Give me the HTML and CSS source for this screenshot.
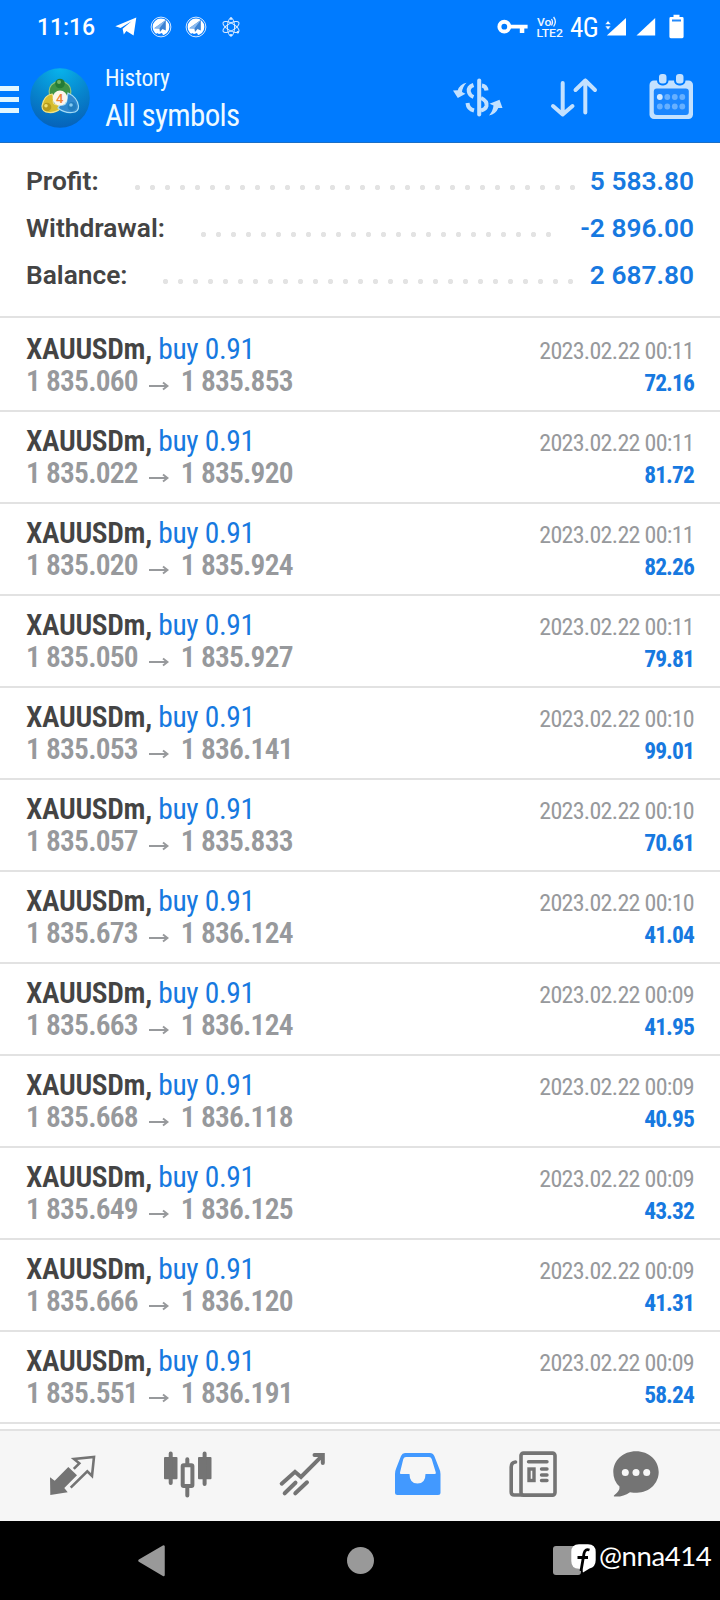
FILE: index.html
```html
<!DOCTYPE html>
<html lang="en">
<head>
<meta charset="utf-8">
<title>History</title>
<link rel="stylesheet" href="styles.css">
</head>
<body>
<div class="status">
  <span class="clock">11:16</span>
  <svg class="tg" width="22" height="20" viewBox="0 0 22 20"><path d="M0.3 9.3 21.3 0.6 18.6 18.6 11.4 14 8.8 17.5 7.6 11.8 16.5 4.2 5.6 11Z" fill="#fff"/></svg>
  <svg class="ring1" width="22" height="22" viewBox="0 0 22 22"><circle cx="11" cy="11" r="9.9" fill="none" stroke="#d5e8ff"/><circle cx="11" cy="11" r="8.4" fill="#fff"/><path d="M4.2 12.2 15.8 4V14.5L12.5 13 10 16 9.4 12.5Z" fill="#3c82d2"/><path d="m4.2 12.2 11.6-8.200-6.400 8.500Z" fill="#8abaf0"/><path d="M6 18.500 7 17 9 18 12 17 13 19 11 20Z" fill="#057aff"/></svg>
  <svg class="ring2" width="22" height="22" viewBox="0 0 22 22"><circle cx="11" cy="11" r="9.9" fill="none" stroke="#d5e8ff"/><circle cx="11" cy="11" r="8.4" fill="#fff"/><path d="M4.2 12.2 15.8 4V14.5L12.5 13 10 16 9.4 12.5Z" fill="#3c82d2"/><path d="m4.2 12.2 11.6-8.200-6.400 8.500Z" fill="#8abaf0"/><path d="M6 18.500 7 17 9 18 12 17 13 19 11 20Z" fill="#057aff"/></svg>
  <svg class="atom" width="18" height="20" viewBox="0 0 18 20" fill="none" stroke="#dcecff" stroke-width="1"><ellipse cx="9" cy="10" rx="3.6" ry="9"/><ellipse cx="9" cy="10" rx="3.6" ry="9" transform="rotate(60 9 10)"/><ellipse cx="9" cy="10" rx="3.6" ry="9" transform="rotate(120 9 10)"/><g fill="#dcecff" stroke="none"><circle cx="9" cy="1.6" r="1.3"/><circle cx="15.8" cy="15.3" r="1.2"/><circle cx="9" cy="18.2" r="1.3"/></g></svg>
  <svg class="key" width="31" height="16" viewBox="0 0 31 16"><circle cx="7.3" cy="7.7" r="4.9" fill="none" stroke="#fff" stroke-width="4"/><path d="M12.5 5.8H30.6V9.6H27.3V14H22.8V9.6H12.5Z" fill="#fff"/></svg>
  <svg class="volte" width="28" height="24" viewBox="0 0 28 24"><g fill="#eef6ff" font-family="Roboto" font-weight="500"><text x="1" y="10" font-size="11" textLength="14.500" lengthAdjust="spacingAndGlyphs">Vo</text><text x="0.500" y="21" font-size="11.500" textLength="26.500" lengthAdjust="spacingAndGlyphs">LTE2</text></g><path d="M15.500 3Q17.500 6 15.500 9.500M17.600 1Q21 5.500 17.600 10.500" fill="none" stroke="#eef6ff" stroke-width="1.300"/></svg>
  <span class="net">4G</span>
  <svg class="sig1" width="22" height="20" viewBox="0 0 22 20" fill="#fff"><path d="M21 1V18.6H1.8Z"/><path d="M0 7.5 3 3.6 6 7.5ZM0 9 3 13 6 9Z" stroke="#007bff" stroke-width=".6"/></svg>
  <svg class="sig2" width="20" height="20" viewBox="0 0 20 20"><path d="M19.2 1V18.6H0.5Z" fill="#fff"/></svg>
  <svg class="bat" width="15" height="25" viewBox="0 0 15 25"><path d="M4.5 0.7H10.5V3H13.2Q14.6 3 14.6 4.4V22.8Q14.6 24.2 13.2 24.2H1.8Q.4 24.2 .4 22.8V4.4Q.4 3 1.8 3H4.5Z" fill="#fff"/><path d="M3 5.500H12V7.500H3Z" fill="#2389fb"/></svg>
</div>
<header class="bar">
  <div class="burger"><i></i><i></i><i></i></div>
  <svg class="logo" width="60" height="60" viewBox="0 0 60 60">
    <defs>
      <radialGradient id="sea" cx=".5" cy="0" r="1"><stop offset="0" stop-color="#08b4ec"/><stop offset=".55" stop-color="#0785cd"/><stop offset="1" stop-color="#0662ba"/></radialGradient>
    </defs>
    <circle cx="30" cy="30" r="29.8" fill="url(#sea)"/>
    <path d="M19.500 27Q18 18 24 15Q30 11 36 15Q42 18 40.500 27L36 30Q31 21 24 31Z" fill="#3d9346" stroke="#93c57a" stroke-width="1.200"/>
    <path d="M22 26Q14 27 12 38Q12 44 19 44.500Q26 45 31 40L28 37Q21 37 24 30Z" fill="#d6bd2f" stroke="#efe28b" stroke-width="1.200"/>
    <path d="M38 25Q47 29 48.500 38Q49 44 42 44.500Q34 45 28 40L30 37Q37 38 37 31Z" fill="#3189cf" stroke="#a5dbf5" stroke-width="1.200"/>
    <circle cx="30" cy="15.5" r="4.8" fill="#247b35"/><circle cx="29" cy="14" r="2" fill="#73b464"/>
    <circle cx="17" cy="39" r="4.3" fill="#b59a1d"/><circle cx="16" cy="37.8" r="1.8" fill="#eee072"/>
    <circle cx="42" cy="38.5" r="4.4" fill="#227dbf"/><circle cx="41" cy="37" r="1.8" fill="#84caf2"/>
    <circle cx="30" cy="30" r="7.4" fill="#fbf6ec"/>
    <text x="29.7" y="34.6" font-family="Roboto" font-weight="500" font-size="13" fill="#ef8333" text-anchor="middle">4</text>
  </svg>
  <div class="titles"><div class="sub">History</div><div class="main">All symbols</div></div>
  <svg class="cash" width="50" height="40" viewBox="0 0 50 40" fill="none" stroke="#c3e1ff" stroke-width="4"><path d="M26.2 2.500V36.500" stroke-linecap="round"/><path d="M20.500 7Q15 9 15.800 13.500Q16.500 17.500 20.500 19M14.5 25Q15 31 21 32.5M29 7.5Q33 8 33.5 12.5M28 20Q34.5 23 33.5 28Q32.5 31.5 28 32.5"/><path d="M13.5 4.8Q6.5 6.500 4.800 12.300L0 12.500 4.800 20 12.500 15.800 9 14Q9.500 9 13.500 4.800ZM36 37.500Q43 36 45.300 30L49.500 30 46.500 21.800 36.500 25.800 40.500 27.500Q40 33 36 37.500Z" fill="#c3e1ff" stroke="none"/></svg>
  <svg class="sort" width="48" height="42" viewBox="0 0 48 42" fill="none" stroke="#c3e1ff" stroke-width="4" stroke-linecap="round" stroke-linejoin="round"><path d="M12.700 6V37.500M3 29 12.700 37.500 22.500 29M35.300 35.500V3.500M25.500 13 35.300 3.500 45 13"/></svg>
  <svg class="cal" width="45" height="46" viewBox="0 0 45 46"><rect x=".500" y="6.500" width="43.500" height="38.500" rx="4.500" fill="#c3e1ff"/><rect x="4.800" y="14.500" width="35" height="26.500" rx="3" fill="#1a86ff"/><g fill="#c3e1ff" stroke="#007bff" stroke-width="2"><rect x="9" y="-1" width="9.500" height="11.500" rx="4"/><rect x="26" y="-1" width="9.500" height="11.500" rx="4"/></g><g fill="#67b0ff"><circle cx="18.300" cy="23" r="2.900"/><circle cx="25.800" cy="23" r="2.900"/><circle cx="33.300" cy="23" r="2.900"/><circle cx="10.800" cy="32.500" r="2.900"/><circle cx="18.300" cy="32.500" r="2.900"/><circle cx="25.800" cy="32.500" r="2.900"/><circle cx="33.300" cy="32.500" r="2.900"/></g><circle cx="10.800" cy="23" r="2.900" fill="#d5eaff"/></svg>
</header>
<section class="summary">
  <div class="line profit"><b>Profit:</b><i></i><em>5 583.80</em></div>
  <div class="line withdrawal"><b>Withdrawal:</b><i></i><em>-2 896.00</em></div>
  <div class="line balance"><b>Balance:</b><i></i><em>2 687.80</em></div>
</section>
<main class="deals">
  <div class="deal"><div><p class="sym"><b>XAUUSDm,</b> buy 0.91</p><p class="price">1 835.060 <svg width="20" height="10" viewBox="0 0 20 10"><path d="M0 5H17M14 1.500 18.500 5 14 8.500"/></svg> 1 835.853</p></div><div class="right"><p class="date">2023.02.22 00:11</p><p class="val">72.16</p></div></div>
  <div class="deal"><div><p class="sym"><b>XAUUSDm,</b> buy 0.91</p><p class="price">1 835.022 <svg width="20" height="10" viewBox="0 0 20 10"><path d="M0 5H17M14 1.500 18.500 5 14 8.500"/></svg> 1 835.920</p></div><div class="right"><p class="date">2023.02.22 00:11</p><p class="val">81.72</p></div></div>
  <div class="deal"><div><p class="sym"><b>XAUUSDm,</b> buy 0.91</p><p class="price">1 835.020 <svg width="20" height="10" viewBox="0 0 20 10"><path d="M0 5H17M14 1.500 18.500 5 14 8.500"/></svg> 1 835.924</p></div><div class="right"><p class="date">2023.02.22 00:11</p><p class="val">82.26</p></div></div>
  <div class="deal"><div><p class="sym"><b>XAUUSDm,</b> buy 0.91</p><p class="price">1 835.050 <svg width="20" height="10" viewBox="0 0 20 10"><path d="M0 5H17M14 1.500 18.500 5 14 8.500"/></svg> 1 835.927</p></div><div class="right"><p class="date">2023.02.22 00:11</p><p class="val">79.81</p></div></div>
  <div class="deal"><div><p class="sym"><b>XAUUSDm,</b> buy 0.91</p><p class="price">1 835.053 <svg width="20" height="10" viewBox="0 0 20 10"><path d="M0 5H17M14 1.500 18.500 5 14 8.500"/></svg> 1 836.141</p></div><div class="right"><p class="date">2023.02.22 00:10</p><p class="val">99.01</p></div></div>
  <div class="deal"><div><p class="sym"><b>XAUUSDm,</b> buy 0.91</p><p class="price">1 835.057 <svg width="20" height="10" viewBox="0 0 20 10"><path d="M0 5H17M14 1.500 18.500 5 14 8.500"/></svg> 1 835.833</p></div><div class="right"><p class="date">2023.02.22 00:10</p><p class="val">70.61</p></div></div>
  <div class="deal"><div><p class="sym"><b>XAUUSDm,</b> buy 0.91</p><p class="price">1 835.673 <svg width="20" height="10" viewBox="0 0 20 10"><path d="M0 5H17M14 1.500 18.500 5 14 8.500"/></svg> 1 836.124</p></div><div class="right"><p class="date">2023.02.22 00:10</p><p class="val">41.04</p></div></div>
  <div class="deal"><div><p class="sym"><b>XAUUSDm,</b> buy 0.91</p><p class="price">1 835.663 <svg width="20" height="10" viewBox="0 0 20 10"><path d="M0 5H17M14 1.500 18.500 5 14 8.500"/></svg> 1 836.124</p></div><div class="right"><p class="date">2023.02.22 00:09</p><p class="val">41.95</p></div></div>
  <div class="deal"><div><p class="sym"><b>XAUUSDm,</b> buy 0.91</p><p class="price">1 835.668 <svg width="20" height="10" viewBox="0 0 20 10"><path d="M0 5H17M14 1.500 18.500 5 14 8.500"/></svg> 1 836.118</p></div><div class="right"><p class="date">2023.02.22 00:09</p><p class="val">40.95</p></div></div>
  <div class="deal"><div><p class="sym"><b>XAUUSDm,</b> buy 0.91</p><p class="price">1 835.649 <svg width="20" height="10" viewBox="0 0 20 10"><path d="M0 5H17M14 1.500 18.500 5 14 8.500"/></svg> 1 836.125</p></div><div class="right"><p class="date">2023.02.22 00:09</p><p class="val">43.32</p></div></div>
  <div class="deal"><div><p class="sym"><b>XAUUSDm,</b> buy 0.91</p><p class="price">1 835.666 <svg width="20" height="10" viewBox="0 0 20 10"><path d="M0 5H17M14 1.500 18.500 5 14 8.500"/></svg> 1 836.120</p></div><div class="right"><p class="date">2023.02.22 00:09</p><p class="val">41.31</p></div></div>
  <div class="deal"><div><p class="sym"><b>XAUUSDm,</b> buy 0.91</p><p class="price">1 835.551 <svg width="20" height="10" viewBox="0 0 20 10"><path d="M0 5H17M14 1.500 18.500 5 14 8.500"/></svg> 1 836.191</p></div><div class="right"><p class="date">2023.02.22 00:09</p><p class="val">58.24</p></div></div>
</main>
<nav class="tabs">
  <svg width="50" height="50" viewBox="0 0 50 50"><path d="M20.300 17 29 25.300 16.300 38 19.700 42.300 2.300 45 2 27.300 6.700 30.700Z" fill="#747474"/><path d="M25.800 18.800 31.300 13.300 26 8.900 46 7 44 26 39.300 21.300 22.700 37.700" fill="none" stroke="#747474" stroke-width="2.600"/></svg>
  <svg width="50" height="50" viewBox="0 0 50 50"><g fill="#747474"><rect x="1" y="7" width="13.500" height="22.300" rx="1"/><rect x="35" y="7" width="13.500" height="22.300" rx="1"/></g><path d="M7.700 3.500V33M24.300 9.300V14M24.300 38V45.500M41.600 3.500V34" stroke="#747474" stroke-width="4" stroke-linecap="round"/><rect x="19.700" y="15.300" width="9.700" height="20.700" rx="1" fill="none" stroke="#747474" stroke-width="4"/></svg>
  <svg width="50" height="50" viewBox="0 0 50 50" fill="none" stroke="#747474" stroke-width="4" stroke-linecap="round" stroke-linejoin="miter"><path d="M3.700 33.700 17 21.800 23 27 44.300 5.700M36.500 5H44.800V13M6.700 43.300 17.500 32.700M17.300 43.300 29 32.300"/></svg>
  <svg width="50" height="50" viewBox="0 0 50 50"><path fill-rule="evenodd" d="M12 3H37Q40 3 41.300 6L46 18Q47.500 21 47.500 24V42.500Q47.500 45 45 45H4.500Q2 45 2 42.500V24Q2 21 3.300 18L8 6Q9.300 3 12 3ZM13 7Q11 7 10.300 9L7 22.500Q6.700 24 8 24H16.500Q16.500 33.500 24.500 33.500 32.500 33.500 32.500 24H41.500Q43.200 24 42.800 22.500L38.700 9Q38 7 36 7Z" fill="#4299ff"/></svg>
  <svg width="50" height="50" viewBox="0 0 50 50" fill="none" stroke="#747474" stroke-width="3.600"><rect x="12" y="3.100" width="34" height="42" rx="2.500"/><path d="M6.500 12Q2.200 12.500 2.200 17V42Q2.200 45 5.200 45H13" stroke-linecap="round"/><path d="M19.500 11.700H38M32.500 19H38M32.500 25H38M32.500 30.500H38" stroke-width="3.400" stroke-linecap="round"/><rect x="20" y="19" width="5" height="11.500" stroke-width="3.400"/></svg>
  <svg width="50" height="50" viewBox="0 0 50 50"><path d="M24 1.300C37 1.300 46.700 10.500 46.700 22S37 42.700 25 42.700Q21.500 42.700 18 42.200 10.500 47.300 2.300 46.500 1 46.200 3 44.500 8 40.500 7.500 36.500 1.300 31 1.300 22C1.300 10.500 11 1.300 24 1.300Z" fill="#747474"/><g fill="#f6f6f6"><circle cx="13.300" cy="22.400" r="3.500"/><circle cx="24" cy="22.400" r="3.500"/><circle cx="34.700" cy="22.400" r="3.500"/></g></svg>
</nav>
<footer class="sys">
  <svg width="28" height="34" viewBox="0 0 28 34"><path d="M1.500 16.700 25.500 2.500V31Z" fill="#999" stroke="#999" stroke-width="2.500" stroke-linejoin="round"/></svg>
  <span class="home"></span>
  <span class="recent"></span>
  <div class="mark">
    <svg width="25" height="29" viewBox="0 0 25 29"><path d="M8 .300H17Q24.700 .300 24.700 8V16Q24.700 23 18.500 24.500L12 28.500 11 24.700H8Q.300 24.700 .300 17V8Q.300 .300 8 .300Z" fill="#fff"/><path d="M18.500 6Q14 4.500 13 9.500L10 27M6.500 13.500H17" fill="none" stroke="#000" stroke-width="2.800"/></svg>
    <span>@nna414</span>
  </div>
</footer>
</body>
</html>
```
FILE: styles.css
```css
* { box-sizing: border-box; }
body { margin: 0; width: 720px; height: 1600px; overflow: hidden; background: #fff; font-family: Roboto, sans-serif; }
p { margin: 0; }
svg { display: block; flex: none; }

.status { height: 54px; background: #007bff; display: flex; align-items: flex-start; color: #fff; padding-left: 37px; }
.clock { width: 78px; font-size: 23px; line-height: 28px; margin-top: 14px; font-weight: 500; letter-spacing: -.1px; white-space: nowrap; }
.tg { margin-top: 17px; }
.ring1, .ring2 { margin: 16px 0 0 13px; }
.atom { margin: 17px 0 0 15px; }
.key { margin: 19px 0 0 257px; }
.volte { margin: 16px 0 0 8px; }
.net { width: 35px; margin: 12px 0 0 6px; font-size: 27px; line-height: 32px; font-stretch: 75%; letter-spacing: -.7px; }
.sig1 { margin: 17px 0 0 0; }
.sig2 { margin: 17px 0 0 9px; }
.bat { margin: 14px 0 0 13px; }

.bar { height: 89px; background: #007bff; border-bottom: 1px solid #1b6fc6; display: flex; align-items: flex-start; }
.burger { width: 19px; margin: 32px 11px 0 0; display: grid; gap: 6px; }
.burger i { height: 5px; background: #e2f7ff; }
.logo { margin-top: 14px; }
.titles { width: 363px; padding: 10px 0 0 15px; color: #eefaff; font-stretch: 75%; }
.sub { font-size: 23.5px; line-height: 28px; letter-spacing: -.25px; }
.main { font-size: 31px; line-height: 36px; margin-top: 6px; letter-spacing: -.65px; }
.cash { margin: 24px 0 0 0; }
.sort { margin: 23px 0 0 47px; }
.cal { margin: 20px 0 0 51px; }

.summary { height: 173px; padding: 16px 26px 0; }
.line { display: flex; height: 47px; font-size: 26.3px; line-height: 45px; }
.line b { color: #444; font-weight: 600; }
.line i { height: 15px; margin: 21px 0 0 auto; background: radial-gradient(circle, #e3e3e3 2.2px, transparent 3px) 0 0 / 15px 15px repeat-x; }
.line em { font-style: normal; font-weight: 600; color: #1779e0; text-align: right; white-space: nowrap; }
.profit i { width: 450px; }
.profit em { width: 114px; }
.withdrawal i { width: 360px; }
.withdrawal em { width: 138px; }
.balance i { width: 420px; }
.balance em { width: 116px; }

.deals { border-top: 2px solid #e2e2e2; padding-top: 2px; height: 1113px; }
.deal { height: 92px; padding: 12px 26px 0; display: flex; justify-content: space-between; border-bottom: 2px solid #e2e2e2; font-stretch: 75%; white-space: nowrap; }
.sym { font-size: 29.5px; line-height: 34px; color: #1779e0; letter-spacing: -.35px; }
.sym b { color: #444; font-weight: 600; }
.price { font-size: 29.5px; line-height: 32px; margin-top: -1px; font-weight: 600; color: #97999c; letter-spacing: -.8px; }
.price svg { display: inline-block; margin: 0 6px 0 5px; vertical-align: 0; fill: none; stroke: #97999c; stroke-width: 2; }
.right { text-align: right; }
.date { font-size: 24px; line-height: 34px; color: #97999c; margin-top: 2px; letter-spacing: -.7px; }
.val { font-size: 23.5px; line-height: 32px; font-weight: 700; color: #1779e0; margin-top: -1px; letter-spacing: -.9px; }

.tabs { height: 92px; background: #f6f6f6; border-top: 2px solid #e2e2e2; display: flex; padding: 19px 0 0 48px; gap: 65px; }
.tabs svg:nth-child(5) { margin-left: 1px; }
.tabs svg:last-child { margin-left: -12px; }

.sys { height: 79px; background: #000; display: flex; align-items: flex-start; padding: 23px 0 0 138px; }
.home { width: 27px; height: 27px; border-radius: 50%; background: #999; margin: 3px 0 0 181px; }
.recent { width: 28px; height: 29px; border-radius: 3px; background: #999; margin: 2px 0 0 179px; }
.mark { display: flex; margin-left: -10px; }
.mark span { margin: -5px 0 0 3px; font: 400 27.5px/34px Lato, sans-serif; letter-spacing: -.4px; color: #fff; }
```
